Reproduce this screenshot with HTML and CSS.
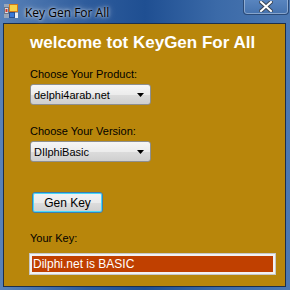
FILE: index.html
```html
<!DOCTYPE html>
<html lang="en">
<head>
  <meta charset="UTF-8">
  <title>Key Gen For All</title>
  <link rel="stylesheet" href="styles.css">
</head>
<body>
  <div class="window">
    <div class="titlebar">
      <svg class="app-icon" width="14" height="14" viewBox="0 0 14 14">
        <rect x="0" y="0" width="14" height="14" fill="#9aa6b8"/>
        <rect x="0.5" y="3.5" width="4" height="6" fill="#d8dde6" stroke="#6b7688"/>
        <rect x="1.5" y="5" width="2" height="3" fill="#d23a2a"/>
        <rect x="5.5" y="0.5" width="8" height="7" fill="#f6d24a" stroke="#d07a1a"/>
        <rect x="5.5" y="8.5" width="5" height="5" fill="#3a78d8" stroke="#2a4f90"/>
        <rect x="11" y="9" width="3" height="5" fill="#e8ecf2"/>
      </svg>
      <span class="title">Key Gen For All</span>
      <div class="close-btn">
        <svg width="14" height="11" viewBox="0 0 14 11">
          <path d="M2 1 L12 10 M12 1 L2 10" stroke="#3a4658" stroke-width="4" stroke-linecap="square"/>
          <path d="M2 1 L12 10 M12 1 L2 10" stroke="#ffffff" stroke-width="2" stroke-linecap="square"/>
        </svg>
      </div>
    </div>

    <div class="client">
      <h1 class="welcome">welcome tot KeyGen For All</h1>

      <div class="label first">Choose Your Product:</div>
      <div class="combo">
        <span>delphi4arab.net</span>
        <svg class="arrow" width="7" height="4" viewBox="0 0 7 4"><path d="M0 0 L7 0 L3.5 4 Z" fill="#000"/></svg>
      </div>

      <div class="label second">Choose Your Version:</div>
      <div class="combo">
        <span>DIlphiBasic</span>
        <svg class="arrow" width="7" height="4" viewBox="0 0 7 4"><path d="M0 0 L7 0 L3.5 4 Z" fill="#000"/></svg>
      </div>

      <button class="gen-btn">Gen Key</button>

      <div class="label third">Your Key:</div>
      <div class="keybox">Dilphi.net is BASIC</div>
    </div>
  </div>
</body>
</html>
```

FILE: styles.css
```css
body {
  margin: 0;
  width: 290px;
  height: 290px;
  overflow: hidden;
  font-family: "Liberation Sans", Arial, sans-serif;
}
.window {
  width: 290px;
  height: 290px;
  box-sizing: border-box;
  display: flex;
  flex-direction: column;
  background: linear-gradient(90deg, #5a82b8 0%, #2e5c9c 30%, #1f4f92 50%, #3b6aa8 75%, #4c78b2 100%);
  padding: 0 4px 3px 3px;
}
.titlebar {
  height: 23px;
  display: flex;
  align-items: center;
  position: relative;
}
.app-icon {
  margin-left: 1px;
  margin-top: -1px;
}
.title {
  margin-left: 7px;
  margin-top: 1px;
  font-family: "Open Sans", "Noto Sans", sans-serif;
  font-size: 12px;
  color: #000;
  text-shadow: 0 0 6px rgba(255,255,255,0.8), 0 0 3px rgba(255,255,255,0.8);
}
.close-btn {
  position: absolute;
  right: -3px;
  top: -1px;
  width: 46px;
  height: 16px;
  box-sizing: border-box;
  border: 1px solid #2a4a78;
  border-top: none;
  border-radius: 0 0 4px 4px;
  box-shadow: inset 0 0 0 1px rgba(255,255,255,0.35);
  background: linear-gradient(#5a86c0, #4572ae);
  display: flex;
  justify-content: center;
  align-items: center;
}
.client {
  flex: 1;
  background: #b8860b;
  border: 1px solid #1c2f4c;
  padding: 0 0 0 26px;
  color: #000;
}
.welcome {
  margin: 10px 0 0 0;
  font-size: 17px;
  font-weight: bold;
  color: #fff;
  line-height: 18px;
}
.label {
  font-size: 11px;
  line-height: 13px;
}
.label.first { margin-top: 16px; }
.label.second { margin-top: 20px; }
.label.third { margin-top: 19px; }
.combo {
  margin-top: 3px;
  width: 121px;
  height: 21px;
  box-sizing: border-box;
  border: 1px solid #8e8f8f;
  border-radius: 3px;
  background: linear-gradient(#f6f6f6 0%, #ececec 50%, #dcdcdc 51%, #cfcfcf 100%);
  display: flex;
  align-items: center;
  justify-content: space-between;
  padding: 0 6px 0 3px;
  font-size: 11px;
}
.arrow {
  margin-top: 1px;
}
.gen-btn {
  display: block;
  margin: 30px 0 0 2px;
  width: 71px;
  height: 21px;
  border: 1px solid #3c7fb1;
  border-radius: 3px;
  background: linear-gradient(#f2f2f2 0%, #ebebeb 50%, #dddddd 51%, #cfcfcf 100%);
  box-shadow: inset 0 0 0 1px #48d8f8;
  font-family: "Liberation Sans", Arial, sans-serif;
  font-size: 12px;
  color: #000;
  padding: 0;
}
.keybox {
  margin-top: 9px;
  width: 245px;
  height: 20px;
  box-sizing: border-box;
  border: 2px solid #f2f2f2;
  outline: 1px solid #c8c8c8;
  background: #c04000;
  color: #fff;
  font-size: 12px;
  line-height: 16px;
  padding-left: 1px;
}
```
